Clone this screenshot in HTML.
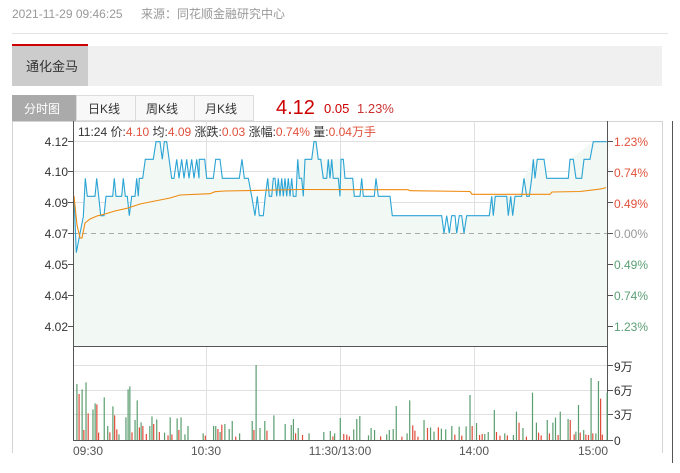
<!DOCTYPE html>
<html><head><meta charset="utf-8"><style>
html,body{margin:0;padding:0;background:#fff;width:680px;height:473px;overflow:hidden}
svg{display:block}
text{font-family:"Liberation Sans","Noto Sans CJK SC",sans-serif}
</style></head><body>
<svg width="680" height="473" viewBox="0 0 680 473" xmlns="http://www.w3.org/2000/svg">
<text x="12" y="18" font-size="12" fill="#999">2021-11-29 09:46:25</text>
<text x="141" y="18" font-size="12" fill="#999">来源：同花顺金融研究中心</text>
<rect x="12" y="33" width="656" height="1" fill="#e3e3e3"/>
<rect x="12" y="46" width="650" height="40" fill="#f0f0f0"/>
<rect x="12" y="46" width="76" height="40" fill="#cccccc"/>
<rect x="12" y="44" width="76" height="2" fill="#cc0000"/>
<text x="26" y="71" font-size="13" fill="#333">通化金马</text>
<rect x="12" y="95" width="64" height="26" fill="#aaaaaa"/>
<text x="24" y="113" font-size="12" fill="#fff">分时图</text>
<rect x="76.5" y="95.5" width="59" height="25" fill="#f8f8f8" stroke="#dcdcdc"/>
<rect x="135.5" y="95.5" width="59" height="25" fill="#f8f8f8" stroke="#dcdcdc"/>
<rect x="194.5" y="95.5" width="59" height="25" fill="#f8f8f8" stroke="#dcdcdc"/>
<text x="88" y="113" font-size="12" fill="#333">日K线</text>
<text x="146" y="113" font-size="12" fill="#333">周K线</text>
<text x="205" y="113" font-size="12" fill="#333">月K线</text>
<text x="276" y="114" font-size="20" fill="#c00">4.12</text>
<text x="324" y="113" font-size="13" fill="#c00">0.05</text>
<text x="357" y="113" font-size="13" fill="#c33">1.23%</text>
<!-- frame -->
<path d="M12.5 121V453M662.5 121V453M12 121.5H662" stroke="#d4d4d4" fill="none"/>
<path d="M672.5 121V463" stroke="#555" fill="none"/>
<!-- grid -->
<g stroke="#e0e0e0" fill="none">
<path d="M73 141.5H608M73 171.5H608M73 202.5H608M73 264.5H608M73 295.5H608M73 326.5H608"/>
<path d="M73 365.5H608M73 390.5H608M73 414.5H608"/>
<path d="M206.5 121V440M340.5 121V440M474.5 121V440"/>
</g>
<!-- fill -->
<polygon fill="#f2f8f3" points="74,346 74,196.7 76.3,252.7 80,233.3 83.3,216.7 85.3,178.3 87.3,196.3 95,196.3 96.7,178.3 98.7,196.3 100.7,215.7 104,215.7 106,196.3 112.7,196.3 114.3,178.3 116,196.3 121.7,196.3 123.3,178.3 125.3,196.3 127.3,196.3 129.3,215.7 131.7,196.3 135,196.3 136.7,178.3 138.3,196.3 139.3,178.3 142.7,178.3 145.3,159.3 153.3,159.3 156,141.7 160,141.7 162.3,159.3 164.3,141.7 166.7,141.7 171.7,178.3 199,178.3 199.3,159.3 204.7,159.3 206.7,178.3 248.3,178.3 251.7,196.3 255,215.7 263.3,215.7 265.3,196.3 267.7,178.3 296,196.3 297.7,159.3 311.7,159.3 314,141.7 316,141.7 318.3,159.3 340,159.3 343.3,159.3 345,178.3 352.7,178.3 354.3,196.3 390,196.3 392.3,215.7 441.7,215.7 444,233.3 466.7,215.7 489.3,215.7 491.7,196.3 521.7,196.3 524,178.3 533.3,159.3 544,159.3 546.7,178.3 568.3,178.3 570,159.3 593.3,141.7 606.7,141.7 606.7,346"/>
<path d="M73 233.5H608" stroke="#aaa" stroke-dasharray="5,4" fill="none"/>
<polyline fill="none" stroke="#2aa4d5" stroke-width="1.1" points="74,196.7 76.3,252.7 80,233.3 83.3,216.7 85.3,178.3 87.3,196.3 95,196.3 96.7,178.3 98.7,196.3 100.7,215.7 104,215.7 106,196.3 112.7,196.3 114.3,178.3 116,196.3 121.7,196.3 123.3,178.3 125.3,196.3 127.3,196.3 129.3,215.7 131.7,196.3 135,196.3 136.7,178.3 138.3,196.3 139.3,178.3 142.7,178.3 145.3,159.3 153.3,159.3 156,141.7 160,141.7 162.3,159.3 164.3,141.7 166.7,141.7 171.7,178.3 174,178.3 176.7,159.3 179,178.3 181.7,159.3 184,178.3 186.7,159.3 189,178.3 191.7,159.3 194,178.3 196.7,159.3 199,178.3 199.3,159.3 204.7,159.3 206.7,178.3 213.3,178.3 215.7,159.3 220,159.3 222.3,178.3 239.3,178.3 242,159.3 244.3,178.3 248.3,178.3 251.7,196.3 255,215.7 257.3,196.3 259.3,215.7 263.3,215.7 265.3,196.3 267.7,178.3 269.3,196.3 271.7,196.3 273.3,178.3 275,178.3 276.7,196.3 278.3,178.3 280,196.3 281.7,178.3 283.3,196.3 285,178.3 286.7,196.3 288.3,178.3 290,196.3 291.7,178.3 293.3,196.3 296,196.3 297.7,159.3 299.3,178.3 301.7,178.3 303.3,196.3 305,159.3 311.7,159.3 314,141.7 316,141.7 318.3,159.3 320.7,159.3 323.3,178.3 326.7,178.3 328.3,159.3 330,178.3 331.7,159.3 333.3,178.3 338.3,178.3 340,196.3 341,159.3 343.3,159.3 345,178.3 352.7,178.3 354.3,196.3 360,196.3 361.7,178.3 363.3,196.3 374.3,196.3 376,178.3 378.3,196.3 390,196.3 392.3,215.7 441.7,215.7 444,233.3 446.7,215.7 449.3,233.3 451.7,215.7 455,215.7 456.7,233.3 459.3,215.7 461.7,215.7 464,233.3 466.7,215.7 489.3,215.7 491.7,196.3 493.3,215.7 495.3,196.3 506.7,196.3 508.3,215.7 510.7,196.3 512.7,215.7 515,196.3 521.7,196.3 524,178.3 526.7,196.3 529.3,196.3 531.7,178.3 533.3,159.3 535,178.3 537.3,159.3 544,159.3 546.7,178.3 568.3,178.3 570,159.3 573.3,159.3 576,178.3 581.7,178.3 584,159.3 590,159.3 593.3,141.7 606.7,141.7"/>
<polyline fill="none" stroke="#f08a10" stroke-width="1.1" points="74,196 77,225 80,238 82,238 85,223 90,219 97,216 105,214 115,211 128,208 140,204 155,201 170,198 180,195 210,193.7 215,191.7 225,191 300,189.5 408,189.7 410,190.7 470,191.5 472,194.3 550,194.3 552,192 580,191.5 598,189.3 603,188.5 606,187.5"/>
<!-- axes -->
<path d="M73.5 121V441M607.5 121V441M73 346.5H608M73 440.5H608" stroke="#555" fill="none"/>
<g stroke="#555"><path d="M68 141.5h5M68 171.5h5M68 202.5h5M68 233.5h5M68 264.5h5M68 295.5h5M68 326.5h5M608 141.5h5M608 171.5h5M608 202.5h5M608 233.5h5M608 264.5h5M608 295.5h5M608 326.5h5M608 365.5h5M608 390.5h5M608 414.5h5M608 440.5h5"/></g>
<!-- volume -->
<g transform="matrix(0.4339 0 0 0.33333 0.54 340)" fill="none" stroke-width="1.2">
<path vector-effect="non-scaling-stroke" stroke="#5a9e6f" d="M176 300V132M188 300V148M197 300V127M213 300V208M218 300V190M239 300V172M247 300V258M259 300V199M273 300V283M289 300V232M294 300V148M298 300V139M310 300V240M315 300V181M324 300V247M344 300V258M349 300V229M360 300V238M378 300V278M391 300V232M407 300V235M416 300V232M425 300V283M432 300V258M467 300V280M491 300V258M496 300V258M506 300V276M517 300V252M527 300V267M534 300V243M551 300V280M580 300V243M589 300V75M598 300V264M609 300V243M630 300V226M656 300V252M670 300V255M675 300V237M686 300V264M711 300V280M745 300V276M760 300V273M770 300V280M783 300V234M814 300V268M821 300V237M828 300V228M848 300V286M854 300V264M862 300V270M890 300V283M896 300V270M905 300V267M912 300V198M937 300V280M943 300V181M976 300V240M991 300V262M999 300V275M1016 300V266M1026 300V268M1040 300V258M1057 300V260M1073 300V259M1082 300V165M1097 300V249M1116 300V282M1124 300V276M1138 300V210M1162 300V280M1182 300V285M1189 300V215M1204 300V264M1226 300V158M1235 300V248M1260 300V240M1273 300V248M1279 300V233M1290 300V215M1308 300V237M1326 300V275M1332 300V195M1344 300V270M1361 300V114M1372 300V280M1378 300V123M1398 300V158"/>
<path vector-effect="non-scaling-stroke" stroke="#e04b3a" d="M181 300V162M192 300V270M202 300V220M222 300V193M226 300V278M252 300V277M263 300V226M268 300V268M303 300V277M320 300V262M328 300V258M336 300V282M353 300V252M366 300V276M386 300V286M395 300V283M411 300V270M472 300V287M501 300V267M510 300V254M542 300V290M584 300V270M614 300V272M680 300V280M696 300V285M766 300V289M791 300V282M798 300V284M804 300V289M876 300V289M925 300V290M950 300V256M955 300V272M962 300V290M984 300V264M1009 300V262M1047 300V284M1063 300V287M1087 300V258M1104 300V285M1110 300V282M1143 300V276M1151 300V287M1168 300V286M1195 300V248M1212 300V290M1240 300V278M1246 300V286M1265 300V280M1285 300V285M1313 300V240M1322 300V283M1336 300V278M1349 300V284M1355 300V285M1365 300V280M1383 300V176M1387 300V284"/>
</g>
<!-- labels -->
<g font-size="12" fill="#333" text-anchor="end">
<text x="68" y="146">4.12</text><text x="68" y="176">4.10</text><text x="68" y="207">4.09</text><text x="68" y="238">4.07</text><text x="68" y="269">4.05</text><text x="68" y="300">4.04</text><text x="68" y="331">4.02</text>
</g>
<g font-size="12">
<text x="614" y="146" fill="#e0513b">1.23%</text><text x="614" y="177" fill="#e0513b">0.74%</text><text x="614" y="208" fill="#e0513b">0.49%</text><text x="614" y="238" fill="#999">0.00%</text><text x="614" y="269" fill="#5a9e74">0.49%</text><text x="614" y="300" fill="#5a9e74">0.74%</text><text x="614" y="331" fill="#5a9e74">1.23%</text>
<text x="614" y="371" fill="#333">9万</text><text x="614" y="395" fill="#333">6万</text><text x="614" y="419" fill="#333">3万</text><text x="614" y="445" fill="#333">0</text>
</g>
<g font-size="12" fill="#555">
<text x="73" y="455">09:30</text>
<text x="206" y="455" text-anchor="middle">10:30</text>
<text x="340" y="455" text-anchor="middle">11:30/13:00</text>
<text x="474" y="455" text-anchor="middle">14:00</text>
<text x="608" y="455" text-anchor="end">15:00</text>
</g>
<text x="78" y="136" font-size="12" fill="#333">11:24 价:<tspan fill="#e0513b">4.10</tspan> 均:<tspan fill="#e0513b">4.09</tspan> 涨跌:<tspan fill="#e0513b">0.03</tspan> 涨幅:<tspan fill="#e0513b">0.74%</tspan> 量:<tspan fill="#e0513b">0.04万手</tspan></text>
</svg>
</body></html>
